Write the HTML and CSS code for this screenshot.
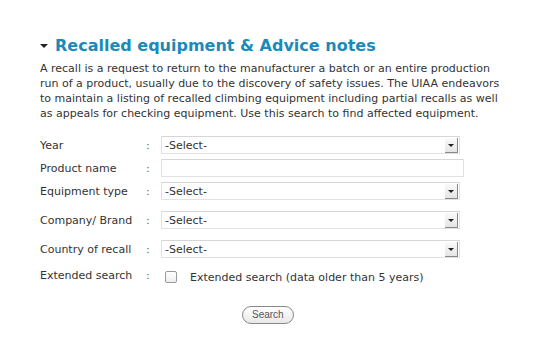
FILE: index.html
```html
<!DOCTYPE html>
<html lang="en">
<head>
  <meta charset="UTF-8" />
  <title>Recalled equipment</title>
  <link rel="stylesheet" href="styles.css">
</head>
<body>
  <div class="recall">
    <h2 class="recall-title"><span class="arrow"></span>Recalled equipment &amp; Advice notes</h2>
    <p class="intro">A recall is a request to return to the manufacturer a batch or an entire production run of a product, usually due to the discovery of safety issues. The UIAA endeavors to maintain a listing of recalled climbing equipment including partial recalls as well as appeals for checking equipment. Use this search to find affected equipment.</p>

    <form class="search-form">
      <div class="row">
        <label>Year</label><span class="colon">:</span>
        <div class="select"><span>-Select-</span><i class="btn"></i></div>
      </div>
      <div class="row">
        <label>Product name</label><span class="colon">:</span>
        <div class="text-input"></div>
      </div>
      <div class="row">
        <label>Equipment type</label><span class="colon">:</span>
        <div class="select"><span>-Select-</span><i class="btn"></i></div>
      </div>
      <div class="row wide">
        <label>Company/ Brand</label><span class="colon">:</span>
        <div class="select"><span>-Select-</span><i class="btn"></i></div>
      </div>
      <div class="row wide">
        <label>Country of recall</label><span class="colon">:</span>
        <div class="select"><span>-Select-</span><i class="btn"></i></div>
      </div>
      <div class="row check-row">
        <label>Extended search</label><span class="colon">:</span>
        <div class="check"><i class="box"></i>Extended search (data older than 5 years)</div>
      </div>
      <div class="actions">
        <span class="search-btn">Search</span>
      </div>
    </form>
  </div>
</body>
</html>
```

FILE: styles.css
```css
body {
  margin: 0;
  background: #fff;
  font-family: 'DejaVu Sans', Verdana, sans-serif;
  color: #333;
}
.recall {
  padding: 36px 0 0 40px;
  width: 470px;
}
.recall-title {
  margin: 0;
  font-size: 16px;
  line-height: 20px;
  color: #1a8abb;
  display: flex;
  align-items: center;
}
.arrow {
  width: 0;
  height: 0;
  border-left: 4px solid transparent;
  border-right: 4px solid transparent;
  border-top: 4px solid #222;
  margin: 0 7px 0 0;
}
.intro {
  margin: 5px 0 0;
  font-size: 11px;
  line-height: 15px;
}

.search-form {
  margin-top: 15px;
  font-size: 11px;
}
.row {
  display: grid;
  grid-template-columns: 106px 15px 299px;
  align-items: center;
  height: 18px;
  margin-bottom: 5px;
}
.row.wide {
  margin-top: 11px;
}
.colon {
  color: #666;
}
.select, .text-input {
  height: 16px;
  border: 1px solid #e2e2e2;
  border-top-color: #d6d6d6;
  display: flex;
  align-items: center;
  justify-content: space-between;
  padding-left: 3px;
  box-sizing: content-box;
}
.text-input {
  width: 298px;
}
.select span {
  font-size: 11px;
}
.btn {
  width: 12px;
  height: 14px;
  margin-right: 1px;
  background: linear-gradient(#fafafa, #e4e4e4);
  border-right: 1px solid #888;
  border-bottom: 1px solid #888;
  position: relative;
}
.btn::after {
  content: "";
  position: absolute;
  left: 3px;
  top: 6px;
  border-left: 3px solid transparent;
  border-right: 3px solid transparent;
  border-top: 3px solid #222;
}
.check-row {
  margin-top: 8px;
}
.check {
  display: flex;
  align-items: center;
  padding-top: 4px;
}
.box {
  width: 10px;
  height: 10px;
  border: 1px solid #999;
  border-radius: 2px;
  background: linear-gradient(#fff, #eee);
  margin: 0 13px 0 4px;
}
.actions {
  margin-top: 22px;
  padding-left: 202px;
}
.search-btn {
  display: inline-block;
  font-family: 'Liberation Sans', Arial, sans-serif;
  font-size: 10px;
  line-height: 14px;
  padding: 1px 9px;
  border: 1px solid #888;
  border-radius: 9px;
  background: linear-gradient(#fff, #e8e8e8);
  color: #555;
}
```
